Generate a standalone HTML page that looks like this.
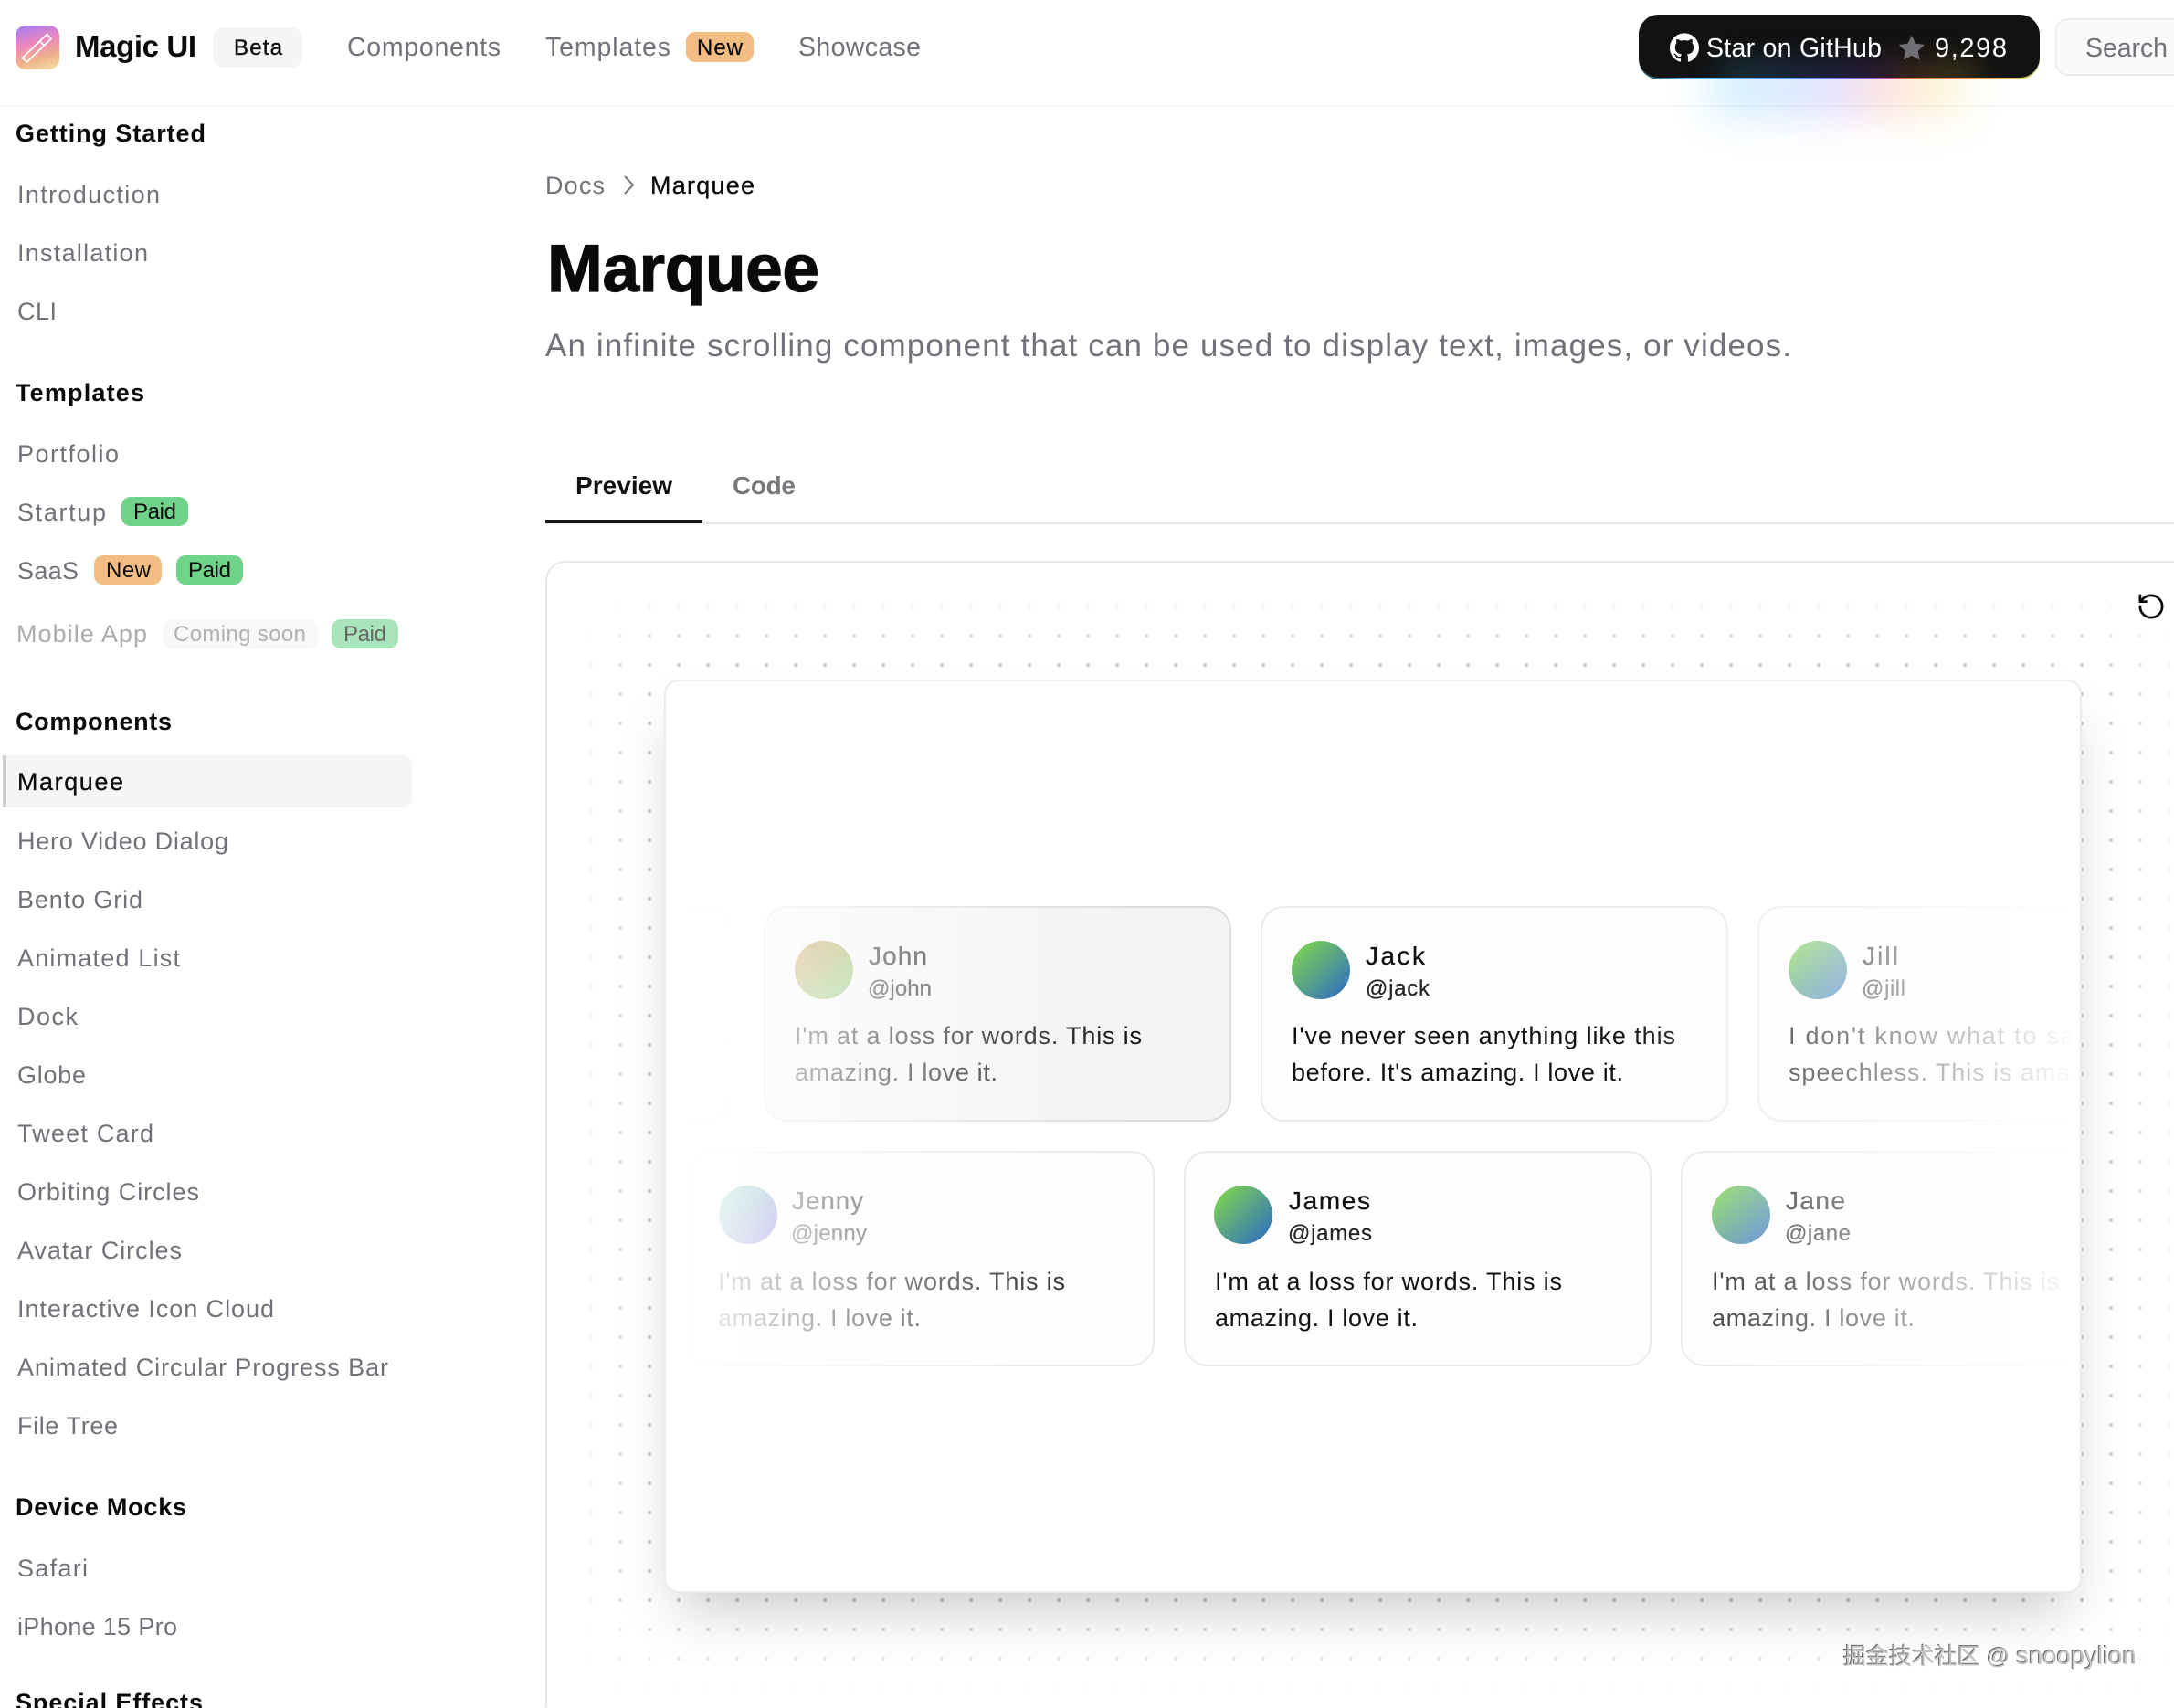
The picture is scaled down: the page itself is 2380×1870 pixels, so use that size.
<!DOCTYPE html>
<html lang="en">
<head>
<meta charset="utf-8">
<title>Marquee</title>
<style>
html,body{margin:0;padding:0;background:#fff;width:2380px;height:1870px;overflow:hidden;font-family:"Liberation Sans","Noto Sans CJK SC",sans-serif}
.a{position:absolute;box-sizing:border-box}
#root{position:relative;width:2380px;height:1870px;overflow:hidden;background:#fff}
.card{position:absolute;width:512px;height:236px;border:2px solid #e9e9ea;border-radius:26px;background:#fdfdfd;box-sizing:border-box}
.av{position:absolute;width:64px;height:64px;border-radius:50%}
.bd{position:absolute;height:32px;border-radius:10px}
svg text{font-family:"Liberation Sans",sans-serif}
.s{font-size:27px;fill:#71717a}
.h{font-size:27px;font-weight:700;fill:#0a0a0a}
.n{font-size:28px;fill:#111;stroke:#111;stroke-width:.3px}
.u{font-size:24px;fill:#222;stroke:#222;stroke-width:.2px}
.t{font-size:27px;fill:#111}
.b{font-size:24px;fill:#0a0a0a}
</style>
</head>
<body>
<div id="root">
  <!-- header line -->
  <div class="a" style="left:0;top:115px;width:2380px;height:2px;background:#f6f6f7"></div>

  <!-- glow -->
  <div class="a" style="left:1872px;top:66px;width:280px;height:62px;background:linear-gradient(90deg,#40c9ff 0%,#5aa8ff 28%,#8a70ff 50%,#ff7a6a 68%,#ffc850 86%,#d8e060 100%);opacity:.24;filter:blur(22px)"></div>

  <!-- github button -->
  <div class="a" style="left:1794px;top:16px;width:439px;height:71px;border-radius:22px;background:linear-gradient(90deg,#1d3a40 0%,#5ac8f0 12%,#5a9cf0 35%,#8a5cf0 58%,#f05a50 66%,#f0a050 85%,#c8d870 100%)"></div>
  <div class="a" style="left:1794px;top:16px;width:439px;height:69px;border-radius:22px;background:#121213;overflow:hidden">
    <div class="a" style="left:90px;top:52px;width:280px;height:34px;background:linear-gradient(90deg,#30b0d0,#4060e0 40%,#8040d0 58%,#d07030 74%,#c8c030);opacity:.26;filter:blur(16px)"></div>
  </div>

  <!-- search -->
  <div class="a" style="left:2250px;top:20px;width:200px;height:63px;border:2px solid #ececed;border-radius:14px;background:#fafafa"></div>

  <!-- logo -->
  <div class="a" style="left:17px;top:28px;width:48px;height:48px;border-radius:11px;background:linear-gradient(165deg,#9a7cf6 0%,#ec86c0 38%,#efb28a 72%,#f6e4a8 100%)"></div>

  <!-- beta + new -->
  <div class="a" style="left:233px;top:30px;width:98px;height:44px;border-radius:12px;background:#f5f5f5"></div>
  <div class="bd" style="left:751px;top:35px;width:74px;height:33px;background:#f2bd82"></div>

  <!-- sidebar badges -->
  <div class="bd" style="left:133px;top:544px;width:73px;background:#6fd38a"></div>
  <div class="bd" style="left:103px;top:608px;width:74px;background:#f2bd82"></div>
  <div class="bd" style="left:193px;top:608px;width:73px;background:#6fd38a"></div>
  <div class="bd" style="left:178px;top:678px;width:170px;background:#f8f8f8"></div>
  <div class="bd" style="left:363px;top:678px;width:73px;background:#a9e5ba"></div>

  <!-- active item -->
  <div class="a" style="left:7px;top:827px;width:444px;height:57px;border-radius:0 10px 10px 0;background:#f5f5f6"></div>
  <div class="a" style="left:3px;top:827px;width:4px;height:57px;background:#d0d0d2"></div>

  <!-- tabs -->
  <div class="a" style="left:597px;top:572px;width:1783px;height:2px;background:#e6e6e7"></div>
  <div class="a" style="left:597px;top:569px;width:172px;height:4px;background:#18181b"></div>

  <!-- outer panel -->
  <div class="a" style="left:597px;top:614px;width:1811px;height:1274px;border:2px solid #e8e8e9;border-radius:22px;background:#fff"></div>

  <!-- dots: horizontal fade wrapping vertical fade -->
  <div class="a" style="left:631px;top:648px;width:1749px;height:1216px;-webkit-mask-image:linear-gradient(90deg,transparent 0,#000 90px,#000 1650px,transparent 1764px);mask-image:linear-gradient(90deg,transparent 0,#000 90px,#000 1650px,transparent 1764px)">
    <div class="a" style="left:0;top:0;width:1749px;height:1216px;background-image:radial-gradient(circle at 16px 16px,#c2c2c4 0,#c2c2c4 1.7px,transparent 2.4px);background-size:32px 32px;-webkit-mask-image:linear-gradient(180deg,transparent 0,#000 90px,#000 1100px,transparent 1212px);mask-image:linear-gradient(180deg,transparent 0,#000 90px,#000 1100px,transparent 1212px)"></div>
  </div>

  <!-- inner panel -->
  <div class="a" style="left:727px;top:744px;width:1552px;height:1000px;border-radius:16px;background:#fff;border:2px solid #ebebec;box-shadow:0 32px 60px -16px rgba(0,0,0,.22)"></div>
  <div class="a" style="left:729px;top:746px;width:1548px;height:996px;border-radius:14px;overflow:hidden">
    <!-- row 1 : coords relative to 729,746 -->
    <div class="card" style="left:-440px;top:246px;border-color:#f5f5f5"></div>
    <div class="card" style="left:107px;top:246px;background:#f3f3f4;border-color:#dcdcde"></div>
    <div class="card" style="left:651px;top:246px"></div>
    <div class="card" style="left:1195px;top:246px"></div>
    <!-- row 2 -->
    <div class="card" style="left:23px;top:514px"></div>
    <div class="card" style="left:567px;top:514px"></div>
    <div class="card" style="left:1111px;top:514px"></div>
    <!-- avatars -->
    <div class="av" style="left:141px;top:284px;background:linear-gradient(135deg,#b8700f,#70d070)"></div>
    <div class="av" style="left:685px;top:284px;background:linear-gradient(135deg,#86dc48,#2a68c8)"></div>
    <div class="av" style="left:1229px;top:284px;background:linear-gradient(135deg,#86dc48,#2a68c8)"></div>
    <div class="av" style="left:58px;top:552px;background:linear-gradient(135deg,#10b880,#6030d8)"></div>
    <div class="av" style="left:600px;top:552px;background:linear-gradient(135deg,#86dc48,#2a68c8)"></div>
    <div class="av" style="left:1145px;top:552px;background:linear-gradient(135deg,#86dc48,#2a68c8)"></div>
  </div>

  <!-- all text and vector -->
  <svg class="a" style="left:0;top:0" width="2380" height="1870" viewBox="0 0 2380 1870">
    <defs><clipPath id="pc"><rect x="730" y="746" width="1538" height="994"/></clipPath></defs>

    <!-- logo wand -->
    <g fill="none" stroke="#fff" stroke-width="1.8" stroke-linejoin="round">
      <path d="M24.5 63.5L29.5 68L56 42.5L51.5 37.5Z"/>
      <path d="M43.5 45L48.5 50"/>
    </g>

    <!-- header -->
    <text x="82" y="62" font-size="33" font-weight="700" fill="#0a0a0a" textLength="133">Magic UI</text>
    <text x="256" y="60" font-size="24" fill="#111" stroke="#111" stroke-width=".4" textLength="53">Beta</text>
    <text x="380" y="61" font-size="28.5" fill="#71717a" textLength="168">Components</text>
    <text x="597" y="61" font-size="28.5" fill="#71717a" textLength="137">Templates</text>
    <text x="763" y="60" font-size="24" fill="#0a0a0a" stroke="#0a0a0a" stroke-width=".25" textLength="50">New</text>
    <text x="874" y="61" font-size="28.5" fill="#71717a" textLength="134">Showcase</text>

    <!-- github button -->
    <path fill="#fff" transform="translate(1828 36) scale(1.333)" d="M12 .297c-6.63 0-12 5.373-12 12 0 5.303 3.438 9.8 8.205 11.385.6.113.82-.258.82-.577 0-.285-.01-1.04-.015-2.04-3.338.724-4.042-1.61-4.042-1.61C4.422 18.07 3.633 17.7 3.633 17.7c-1.087-.744.084-.729.084-.729 1.205.084 1.838 1.236 1.838 1.236 1.07 1.835 2.809 1.305 3.495.998.108-.776.417-1.305.76-1.605-2.665-.3-5.466-1.332-5.466-5.93 0-1.31.465-2.38 1.235-3.22-.135-.303-.54-1.523.105-3.176 0 0 1.005-.322 3.3 1.23.96-.267 1.98-.399 3-.405 1.02.006 2.04.138 3 .405 2.28-1.552 3.285-1.23 3.285-1.23.645 1.653.24 2.873.12 3.176.765.84 1.23 1.91 1.23 3.22 0 4.61-2.805 5.625-5.475 5.92.42.36.81 1.096.81 2.22 0 1.606-.015 2.896-.015 3.286 0 .315.21.69.825.57C20.565 22.092 24 17.592 24 12.297c0-6.627-5.373-12-12-12"/>
    <text x="1868" y="62" font-size="28.5" fill="#fff" textLength="192">Star on GitHub</text>
    <path fill="#6f6f74" transform="translate(2076 36) scale(1.4)" d="M12 2l3.09 6.26L22 9.27l-5 4.87 1.18 6.88L12 17.77l-6.18 3.25L7 14.14 2 9.27l6.91-1.01L12 2z"/>
    <text x="2118" y="62" font-size="29" fill="#fff" textLength="79">9,298</text>
    <text x="2283" y="62" font-size="28.5" fill="#71717a" textLength="90">Search</text>

    <!-- sidebar -->
    <text class="h" x="17" y="155" textLength="208">Getting Started</text>
    <text class="s" x="19" y="222" textLength="156">Introduction</text>
    <text class="s" x="19" y="286" textLength="143">Installation</text>
    <text class="s" x="19" y="350" textLength="43">CLI</text>
    <text class="h" x="17" y="439" textLength="141">Templates</text>
    <text class="s" x="19" y="506" textLength="111">Portfolio</text>
    <text class="s" x="19" y="570" textLength="97">Startup</text>
    <text class="b" x="146" y="568" textLength="47">Paid</text>
    <text class="s" x="19" y="634" textLength="67">SaaS</text>
    <text class="b" x="116" y="632" textLength="49">New</text>
    <text class="b" x="206" y="632" textLength="47">Paid</text>
    <text class="s" x="18" y="703" textLength="143" style="fill:#ababaf">Mobile App</text>
    <text class="b" x="190" y="702" textLength="145" style="fill:#b0b0b3">Coming soon</text>
    <text class="b" x="376" y="702" textLength="47" style="fill:#666">Paid</text>
    <text class="h" x="17" y="799" textLength="171">Components</text>
    <text x="19" y="865" font-size="27" fill="#0a0a0a" stroke="#0a0a0a" stroke-width=".3" textLength="116">Marquee</text>
    <text class="s" x="19" y="930" textLength="231">Hero Video Dialog</text>
    <text class="s" x="19" y="994" textLength="137">Bento Grid</text>
    <text class="s" x="19" y="1058" textLength="178">Animated List</text>
    <text class="s" x="19" y="1122" textLength="66">Dock</text>
    <text class="s" x="19" y="1186" textLength="75">Globe</text>
    <text class="s" x="19" y="1250" textLength="149">Tweet Card</text>
    <text class="s" x="19" y="1314" textLength="199">Orbiting Circles</text>
    <text class="s" x="19" y="1378" textLength="180">Avatar Circles</text>
    <text class="s" x="19" y="1442" textLength="281">Interactive Icon Cloud</text>
    <text class="s" x="19" y="1506" textLength="406">Animated Circular Progress Bar</text>
    <text class="s" x="19" y="1570" textLength="110">File Tree</text>
    <text class="h" x="17" y="1659" textLength="187">Device Mocks</text>
    <text class="s" x="19" y="1726" textLength="77">Safari</text>
    <text class="s" x="19" y="1790" textLength="175">iPhone 15 Pro</text>
    <text class="h" x="17" y="1873" textLength="205">Special Effects</text>

    <!-- breadcrumb / title -->
    <text class="s" x="597" y="212" textLength="65">Docs</text>
    <polyline points="684,193 693,202.5 684,212" fill="none" stroke="#77777c" stroke-width="2"/>
    <text x="712" y="212" font-size="27" fill="#0a0a0a" stroke="#0a0a0a" stroke-width=".3" textLength="114">Marquee</text>
    <text x="599" y="319" font-size="73" font-weight="700" fill="#0a0a0a" stroke="#0a0a0a" stroke-width="1.2" textLength="298">Marquee</text>
    <text x="597" y="390" font-size="35" fill="#71717a" textLength="1364">An infinite scrolling component that can be used to display text, images, or videos.</text>

    <!-- tabs -->
    <text x="630" y="541" font-size="28" font-weight="700" fill="#111" textLength="106">Preview</text>
    <text x="802" y="541" font-size="28" font-weight="700" fill="#77777c" textLength="69">Code</text>

    <!-- card text -->
    <g clip-path="url(#pc)">
      <text class="n" x="951" y="1056" textLength="64">John</text>
      <text class="u" x="950" y="1090" textLength="70">@john</text>
      <text class="t" x="870" y="1143" textLength="380">I'm at a loss for words. This is</text>
      <text class="t" x="870" y="1183" textLength="222">amazing. I love it.</text>

      <text class="n" x="1495" y="1056" textLength="65">Jack</text>
      <text class="u" x="1495" y="1090" textLength="70">@jack</text>
      <text class="t" x="1414" y="1143" textLength="420">I've never seen anything like this</text>
      <text class="t" x="1414" y="1183" textLength="363">before. It's amazing. I love it.</text>

      <text class="n" x="2039" y="1056" textLength="39">Jill</text>
      <text class="u" x="2038" y="1090" textLength="48">@jill</text>
      <text class="t" x="1958" y="1143" textLength="385">I don't know what to say. I'm</text>
      <text class="t" x="1958" y="1183" textLength="370">speechless. This is amazing.</text>

      <text class="n" x="867" y="1324" textLength="78">Jenny</text>
      <text class="u" x="866" y="1358" textLength="83">@jenny</text>
      <text class="t" x="786" y="1412" textLength="380">I'm at a loss for words. This is</text>
      <text class="t" x="786" y="1452" textLength="222">amazing. I love it.</text>

      <text class="n" x="1411" y="1324" textLength="89">James</text>
      <text class="u" x="1410" y="1358" textLength="92">@james</text>
      <text class="t" x="1330" y="1412" textLength="380">I'm at a loss for words. This is</text>
      <text class="t" x="1330" y="1452" textLength="222">amazing. I love it.</text>

      <text class="n" x="1955" y="1324" textLength="65">Jane</text>
      <text class="u" x="1954" y="1358" textLength="72">@jane</text>
      <text class="t" x="1874" y="1412" textLength="380">I'm at a loss for words. This is</text>
      <text class="t" x="1874" y="1452" textLength="222">amazing. I love it.</text>
    </g>

    <!-- refresh icon -->
    <g transform="translate(2338.8 647.8) scale(1.35)" fill="none" stroke="#0a0a0a" stroke-width="2" stroke-linecap="round" stroke-linejoin="round">
      <path d="M3 12a9 9 0 1 0 9-9 9.75 9.75 0 0 0-6.74 2.74L3 8"/>
      <path d="M3 3v5h5"/>
    </g>
  </svg>

  <!-- marquee fades -->
  <div class="a" style="left:729px;top:970px;width:510px;height:550px;background:linear-gradient(90deg,#fff,rgba(255,255,255,0))"></div>
  <div class="a" style="left:1767px;top:970px;width:510px;height:550px;background:linear-gradient(270deg,#fff,rgba(255,255,255,0))"></div>

  <!-- watermark -->
  <div class="a" style="left:2018px;top:1797px;width:350px;height:32px;line-height:32px;font-size:25px;white-space:nowrap;color:#c4c4c4;text-shadow:-1px -1px 0 #6a6a6a,1px 1px 0 #fff">掘金技术社区 @ <span style="font-size:27.5px">snoopylion</span></div>
</div>
</body>
</html>
